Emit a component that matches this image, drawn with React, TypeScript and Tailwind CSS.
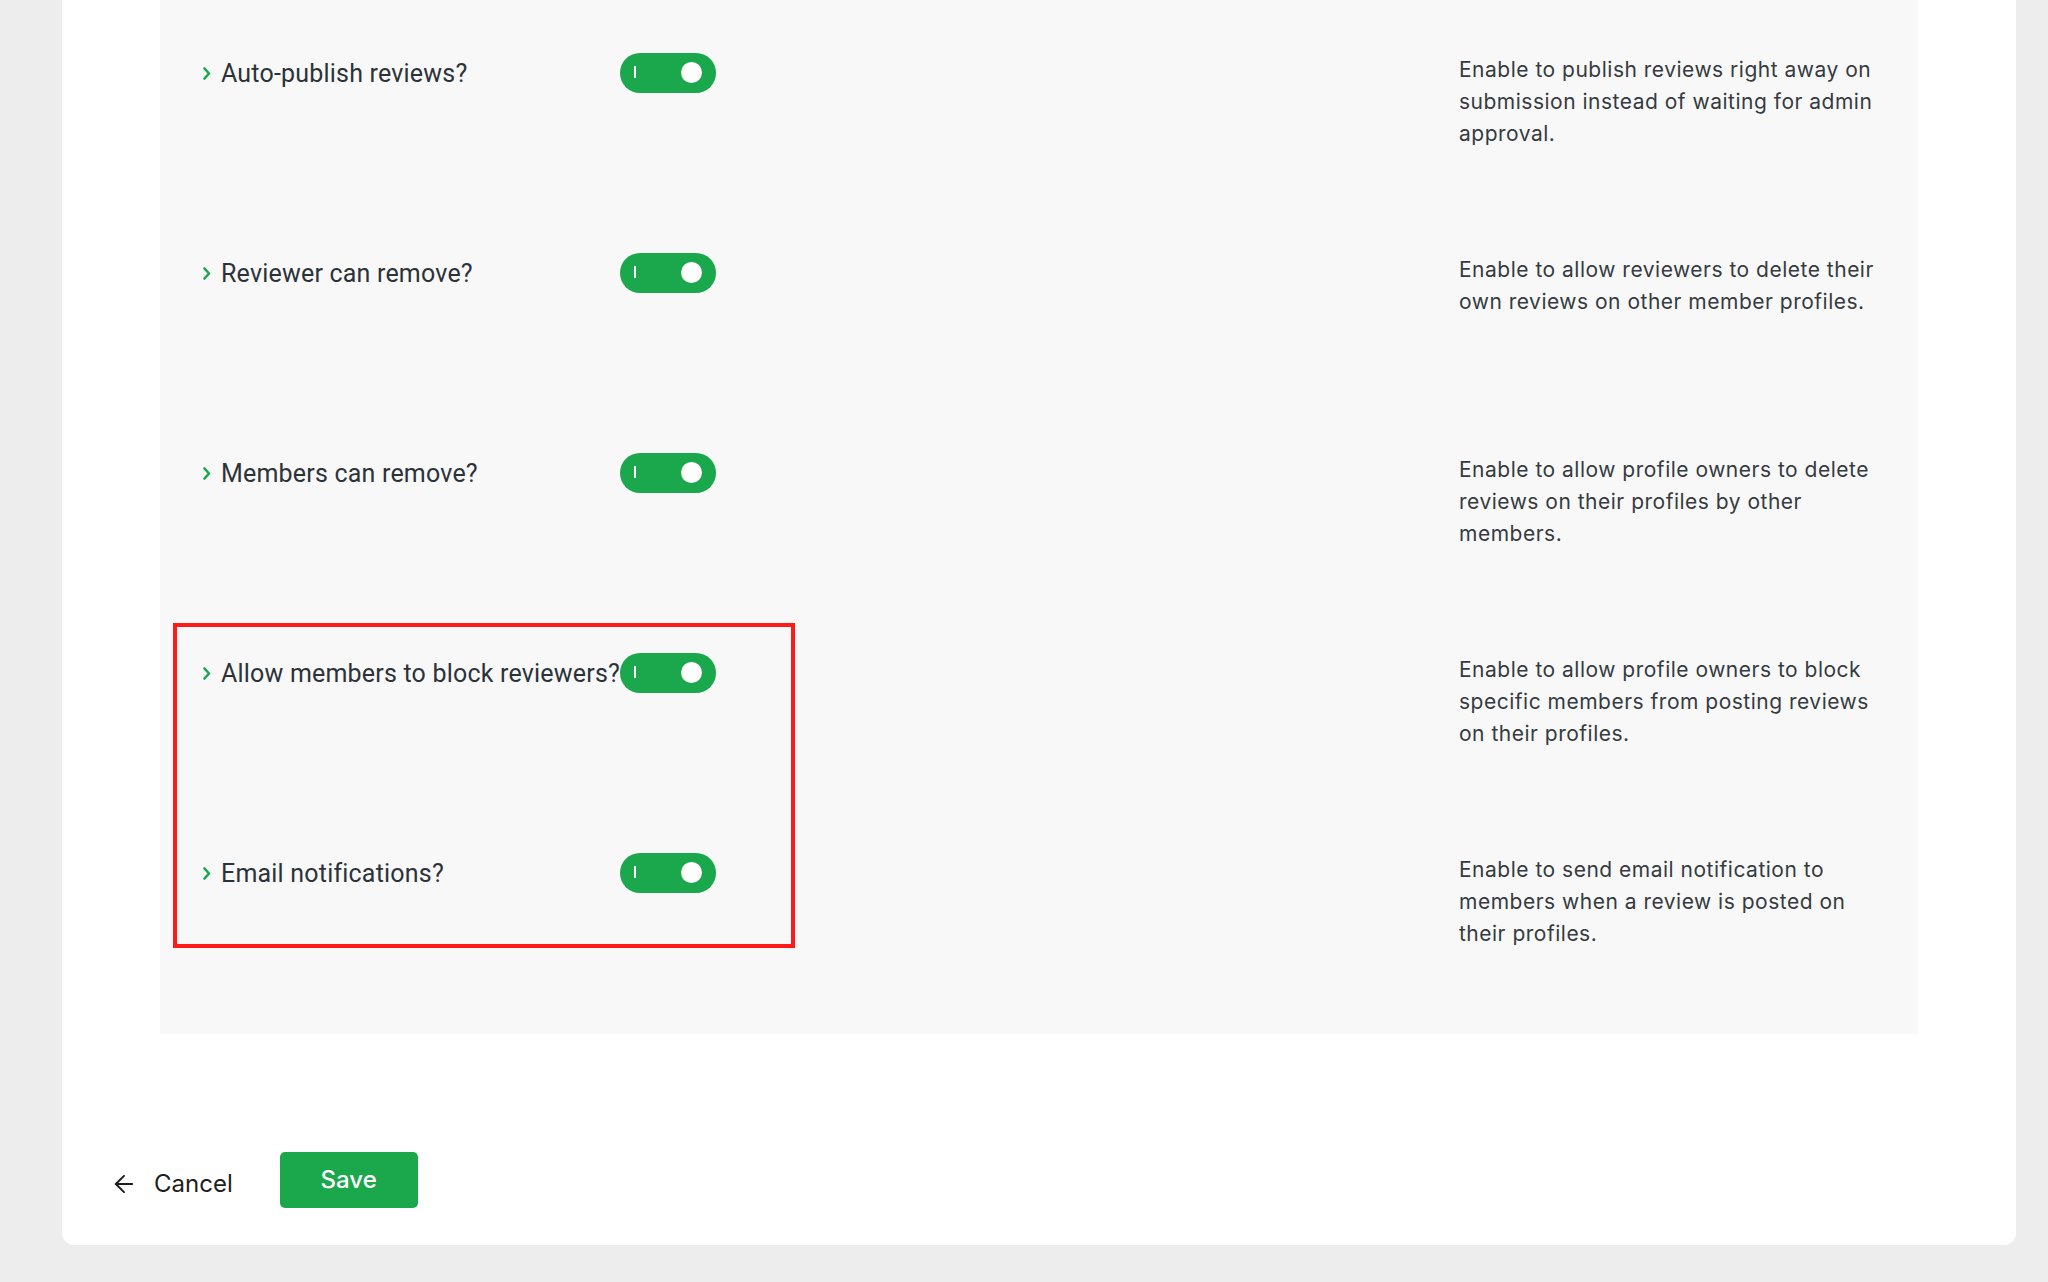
import { ArrowLeft } from "lucide-react";

interface SettingProps {
  label: string;
  description: string;
  last?: boolean;
}

const Chevron = () => (
  <svg width="8" height="13" viewBox="0 0 8 13" fill="none" className="shrink-0">
    <path d="M1.5 1.5 L6 6.5 L1.5 11.5" stroke="#1ba74b" strokeWidth="2.6" strokeLinecap="round" strokeLinejoin="round" />
  </svg>
);

const Toggle = () => (
  <div className="relative w-[96px] h-[40px] shrink-0 rounded-full bg-[#1ba74b]">
    <span className="absolute left-[14px] top-[13px] w-[2px] h-[12px] bg-white" />
    <span className="absolute right-[14px] top-[9px] w-[21px] h-[21px] rounded-full bg-white" />
  </div>
);

const SettingRow = ({ label, description, last }: SettingProps) => (
  <div className={`flex items-start ${last ? "" : "h-[200px]"}`}>
    <div className="w-[417px] h-[40px] flex items-center gap-[10px] shrink-0">
      <Chevron />
      <span className="text-[25px] tracking-[0.2px] text-[#2c3338] font-['Roboto',sans-serif] whitespace-nowrap leading-none">
        {label}
      </span>
    </div>
    <Toggle />
    <div className="flex-1" />
    <p className="w-[426px] text-[21px] tracking-[0.5px] leading-[32px] text-[#353b41] font-['Inter',sans-serif] mt-[1px]">
      {description}
    </p>
  </div>
);

const settings: Array<SettingProps> = [
  {
    label: "Auto-publish reviews?",
    description: "Enable to publish reviews right away on submission instead of waiting for admin approval.",
  },
  {
    label: "Reviewer can remove?",
    description: "Enable to allow reviewers to delete their own reviews on other member profiles.",
  },
  {
    label: "Members can remove?",
    description: "Enable to allow profile owners to delete reviews on their profiles by other members.",
  },
];

export default function App() {
  return (
    <div className="w-full h-[1282px] bg-[#ededed] pl-[62px] pr-[32px] font-['Inter',sans-serif]">
      <div className="h-[1245px] bg-white rounded-b-[12px] flex flex-col">
        <div className="mx-[98px] bg-[#f8f8f8] pt-[53px] pb-[84px] pl-[43px] pr-[33px]">
          {settings.map((s) => (
            <SettingRow key={s.label} {...s} />
          ))}
          <div className="relative">
            <div className="absolute left-[-30px] top-[-30px] w-[622px] h-[325px] border-[4px] border-[#ff1a1a] pointer-events-none" />
            <SettingRow
              label="Allow members to block reviewers?"
              description="Enable to allow profile owners to block specific members from posting reviews on their profiles."
            />
            <SettingRow
              label="Email notifications?"
              description="Enable to send email notification to members when a review is posted on their profiles."
              last
            />
          </div>
        </div>
        <div className="flex items-center pl-[48px] mt-[118px]">
          <button className="flex items-center gap-[16px] text-[24px] text-[#1e1e1e] mt-[8px]">
            <ArrowLeft size={28} strokeWidth={1.7} />
            <span>Cancel</span>
          </button>
          <button className="ml-[47px] w-[138px] h-[56px] rounded-[5px] bg-[#1ba74b] text-white text-[24px] font-medium">
            Save
          </button>
        </div>
      </div>
    </div>
  );
}
